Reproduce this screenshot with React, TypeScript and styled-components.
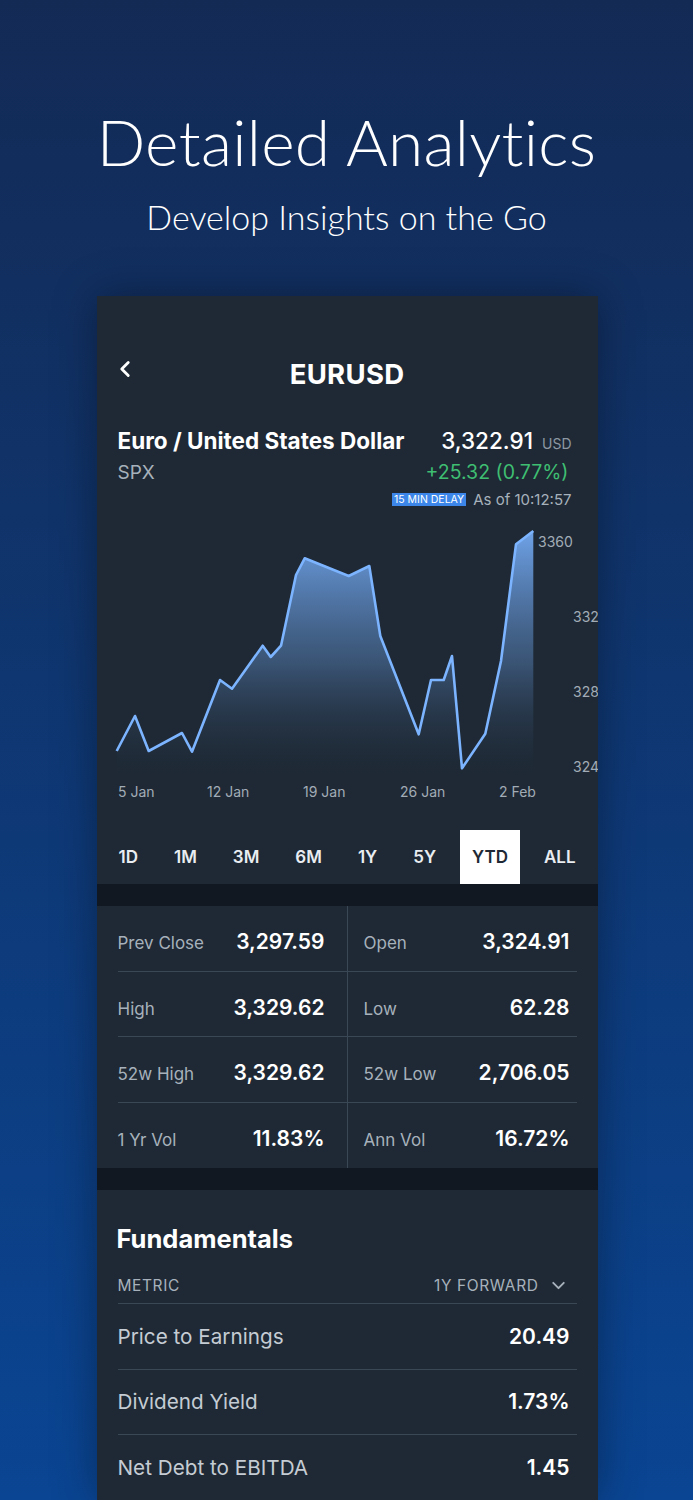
import styled, { createGlobalStyle } from "styled-components";
import { ChevronLeft, ChevronDown } from "lucide-react";

const cardBg = "#1e2935";
const bandBg = "#111821";
const lineColor = "#3a4755";
const muted = "#a7b1bb";
const uiFont = `Inter, "Noto Sans", "Liberation Sans", sans-serif`;

const GlobalStyle = createGlobalStyle`
  html, body {
    margin: 0;
    padding: 0;
    background: #122a55;
  }
  * {
    box-sizing: border-box;
  }
`;

const Page = styled.div`
  height: 1500px;
  overflow: hidden;
  background: linear-gradient(180deg, #132a55 0%, #0f3670 45%, #0a4593 100%);
  display: flex;
  flex-direction: column;
  align-items: center;
  padding-top: 104px;
`;

const Title = styled.h1`
  margin: 0;
  font-family: Lato, "Open Sans", sans-serif;
  font-weight: 300;
  font-size: 64px;
  line-height: 76px;
  color: #ffffff;
  letter-spacing: 0.3px;
`;

const Subtitle = styled.h2`
  margin: 15px 0 0;
  font-family: Lato, "Open Sans", sans-serif;
  font-weight: 300;
  font-size: 34px;
  line-height: 44px;
  color: #ffffff;
`;

const Card = styled.div`
  margin-top: 57px;
  width: 501px;
  flex: 1;
  background: ${cardBg};
  box-shadow: 0 0 40px rgba(0, 0, 0, 0.35);
  font-family: ${uiFont};
  color: #ffffff;
  margin-left: 1px;
`;

const NavBar = styled.div`
  display: grid;
  grid-template-columns: 60px 1fr 60px;
  align-items: center;
  height: 48px;
  margin-top: 54px;
`;

const BackButton = styled.div`
  display: flex;
  align-items: center;
  padding-left: 15px;
  margin-top: -10px;
  color: #ffffff;
`;

const NavTitle = styled.div`
  text-align: center;
  font-size: 27.5px;
  font-weight: 700;
  letter-spacing: 0.3px;
`;

const Quote = styled.div`
  padding: 28px 26px 0 21px;
`;

const QuoteRow = styled.div`
  display: flex;
  justify-content: space-between;
  align-items: baseline;
`;

const Name = styled.div`
  font-size: 22.5px;
  font-weight: 700;
  line-height: 30px;
`;

const Price = styled.div`
  font-size: 22.5px;
  font-weight: 500;
  line-height: 30px;
`;

const Currency = styled.span`
  font-size: 14px;
  color: #8d97a2;
  margin-left: 9px;
  font-weight: 400;
`;

const Symbol = styled.div`
  font-size: 19px;
  color: ${muted};
  line-height: 26px;
`;

const Change = styled.div`
  font-size: 19.5px;
  color: #3fbe72;
  line-height: 26px;
  margin-right: 3px;
`;

const DelayRow = styled.div`
  display: flex;
  justify-content: flex-end;
  align-items: center;
  gap: 7px;
  margin-top: 4px;
`;

const Badge = styled.span`
  background: #3b86e8;
  color: #ffffff;
  font-size: 10.5px;
  line-height: 13px;
  padding: 0 2px;
`;

const AsOf = styled.span`
  font-size: 15px;
  color: ${muted};
`;

const ChartSvg = styled.svg`
  display: block;
  margin-top: 7px;
`;

const Tabs = styled.div`
  display: flex;
  justify-content: space-between;
  height: 54px;
  padding: 0 10px;
  margin-top: 24px;
`;

const Tab = styled.div<{ $active?: boolean }>`
  display: flex;
  align-items: center;
  padding: 0 12px;
  font-size: 17px;
  font-weight: 600;
  color: ${(p) => (p.$active ? "#1e2935" : "#e9edf1")};
  background: ${(p) => (p.$active ? "#ffffff" : "transparent")};
`;

const Band = styled.div`
  height: 22px;
  background: ${bandBg};
`;

const StatsGrid = styled.div`
  display: grid;
  grid-template-columns: 230px 1fr;
  padding: 0 21px;
`;

const StatColumn = styled.div<{ $left?: boolean }>`
  border-right: ${(p) => (p.$left ? `1px solid ${lineColor}` : "none")};
`;

const StatRow = styled.div<{ $last?: boolean; $left?: boolean }>`
  display: flex;
  justify-content: space-between;
  align-items: baseline;
  height: 65.5px;
  padding: 23px ${(p) => (p.$left ? "22px" : "7px")} 0 ${(p) => (p.$left ? "0" : "16px")};
  border-bottom: ${(p) => (p.$last ? "none" : `1px solid ${lineColor}`)};
`;

const StatLabel = styled.span`
  font-size: 17px;
  color: ${muted};
`;

const StatValue = styled.span`
  font-size: 21px;
  font-weight: 600;
  color: #ffffff;
`;

const Fundamentals = styled.div`
  padding: 31px 21px 0 21px;
`;

const SectionTitle = styled.div`
  font-size: 25.5px;
  font-weight: 700;
  line-height: 36px;
  margin-left: -1px;
`;

const TableHead = styled.div`
  display: flex;
  justify-content: space-between;
  align-items: center;
  height: 47px;
  padding-top: 11px;
  padding-right: 8px;
  border-bottom: 1px solid ${lineColor};
  font-size: 15.5px;
  letter-spacing: 0.6px;
  color: ${muted};
`;

const HeadRight = styled.div`
  display: flex;
  align-items: center;
  gap: 9px;
`;

const FundRow = styled.div`
  display: flex;
  justify-content: space-between;
  align-items: center;
  height: 65.5px;
  padding-right: 7px;
  border-bottom: 1px solid ${lineColor};
`;

const FundLabel = styled.span`
  font-size: 20.7px;
  color: #c5ccd3;
`;

const FundValue = styled.span`
  font-size: 21px;
  font-weight: 600;
`;

const points: [number, number][] = [
  [19.7, 235], [38, 200], [51.7, 235], [85, 217], [95, 235.7], [123, 164],
  [135, 172.7], [165.7, 129.7], [173.7, 141], [184, 129.7], [199, 59],
  [207.7, 42.3], [251.7, 60], [272.3, 50], [283.3, 120], [321.7, 218.3],
  [334, 164], [346.7, 164], [355, 140], [365, 252.3], [388.3, 217.7],
  [404, 145], [419, 28.3], [436.3, 15],
];

const linePath = points.map(([x, y], i) => `${i ? "L" : "M"}${x} ${y}`).join(" ");
const areaPath = `${linePath} L436.3 258 L19.7 258 Z`;

// lower axis labels sit against the card edge, as in the app
const yLabels = [
  { text: "3360", x: 441, y: 31 },
  { text: "332", x: 476, y: 106 },
  { text: "328", x: 476, y: 181 },
  { text: "324", x: 476, y: 256 },
];

const xLabels = [
  { text: "5 Jan", x: 21 },
  { text: "12 Jan", x: 110 },
  { text: "19 Jan", x: 206 },
  { text: "26 Jan", x: 303 },
  { text: "2 Feb", x: 402 },
];

const ranges = ["1D", "1M", "3M", "6M", "1Y", "5Y", "YTD", "ALL"];

const leftStats = [
  { label: "Prev Close", value: "3,297.59" },
  { label: "High", value: "3,329.62" },
  { label: "52w High", value: "3,329.62" },
  { label: "1 Yr Vol", value: "11.83%" },
];

const rightStats = [
  { label: "Open", value: "3,324.91" },
  { label: "Low", value: "62.28" },
  { label: "52w Low", value: "2,706.05" },
  { label: "Ann Vol", value: "16.72%" },
];

const fundamentals = [
  { label: "Price to Earnings", value: "20.49" },
  { label: "Dividend Yield", value: "1.73%" },
  { label: "Net Debt to EBITDA", value: "1.45" },
];

function PriceChart() {
  return (
    <ChartSvg width={501} height={290} viewBox="0 0 501 290">
      <defs>
        <linearGradient id="area" x1="0" y1="0" x2="0" y2="1">
          <stop offset="0" stopColor="#73a9f2" stopOpacity="0.95" />
          <stop offset="0.55" stopColor="#4b6f9c" stopOpacity="0.6" />
          <stop offset="1" stopColor="#1e2935" stopOpacity="0.1" />
        </linearGradient>
      </defs>
      <path d={areaPath} fill="url(#area)" />
      <path
        d={linePath}
        fill="none"
        stroke="#7cb4ff"
        strokeWidth={2.6}
        strokeLinejoin="round"
      />
      {yLabels.map((l) => (
        <text key={l.text} x={l.x} y={l.y} fill="#a2acb6" fontSize={14} fontFamily={uiFont}>
          {l.text}
        </text>
      ))}
      {xLabels.map((l) => (
        <text key={l.text} x={l.x} y={281} fill="#a2acb6" fontSize={14} fontFamily={uiFont}>
          {l.text}
        </text>
      ))}
    </ChartSvg>
  );
}

export default function App() {
  return (
    <>
      <GlobalStyle />
      <Page>
        <Title>Detailed Analytics</Title>
        <Subtitle>Develop Insights on the Go</Subtitle>
        <Card>
          <NavBar>
            <BackButton>
              <ChevronLeft size={26} strokeWidth={2.6} />
            </BackButton>
            <NavTitle>EURUSD</NavTitle>
            <div />
          </NavBar>
          <Quote>
            <QuoteRow>
              <Name>Euro / United States Dollar</Name>
              <Price>
                3,322.91<Currency>USD</Currency>
              </Price>
            </QuoteRow>
            <QuoteRow>
              <Symbol>SPX</Symbol>
              <Change>+25.32 (0.77%)</Change>
            </QuoteRow>
            <DelayRow>
              <Badge>15 MIN DELAY</Badge>
              <AsOf>As of 10:12:57</AsOf>
            </DelayRow>
          </Quote>
          <PriceChart />
          <Tabs>
            {ranges.map((r) => (
              <Tab key={r} $active={r === "YTD"}>
                {r}
              </Tab>
            ))}
          </Tabs>
          <Band />
          <StatsGrid>
            <StatColumn $left>
              {leftStats.map((s, i) => (
                <StatRow key={s.label} $left $last={i === leftStats.length - 1}>
                  <StatLabel>{s.label}</StatLabel>
                  <StatValue>{s.value}</StatValue>
                </StatRow>
              ))}
            </StatColumn>
            <StatColumn>
              {rightStats.map((s, i) => (
                <StatRow key={s.label} $last={i === rightStats.length - 1}>
                  <StatLabel>{s.label}</StatLabel>
                  <StatValue>{s.value}</StatValue>
                </StatRow>
              ))}
            </StatColumn>
          </StatsGrid>
          <Band />
          <Fundamentals>
            <SectionTitle>Fundamentals</SectionTitle>
            <TableHead>
              <span>METRIC</span>
              <HeadRight>
                1Y FORWARD
                <ChevronDown size={21} strokeWidth={2.2} />
              </HeadRight>
            </TableHead>
            {fundamentals.map((f) => (
              <FundRow key={f.label}>
                <FundLabel>{f.label}</FundLabel>
                <FundValue>{f.value}</FundValue>
              </FundRow>
            ))}
          </Fundamentals>
        </Card>
      </Page>
    </>
  );
}
